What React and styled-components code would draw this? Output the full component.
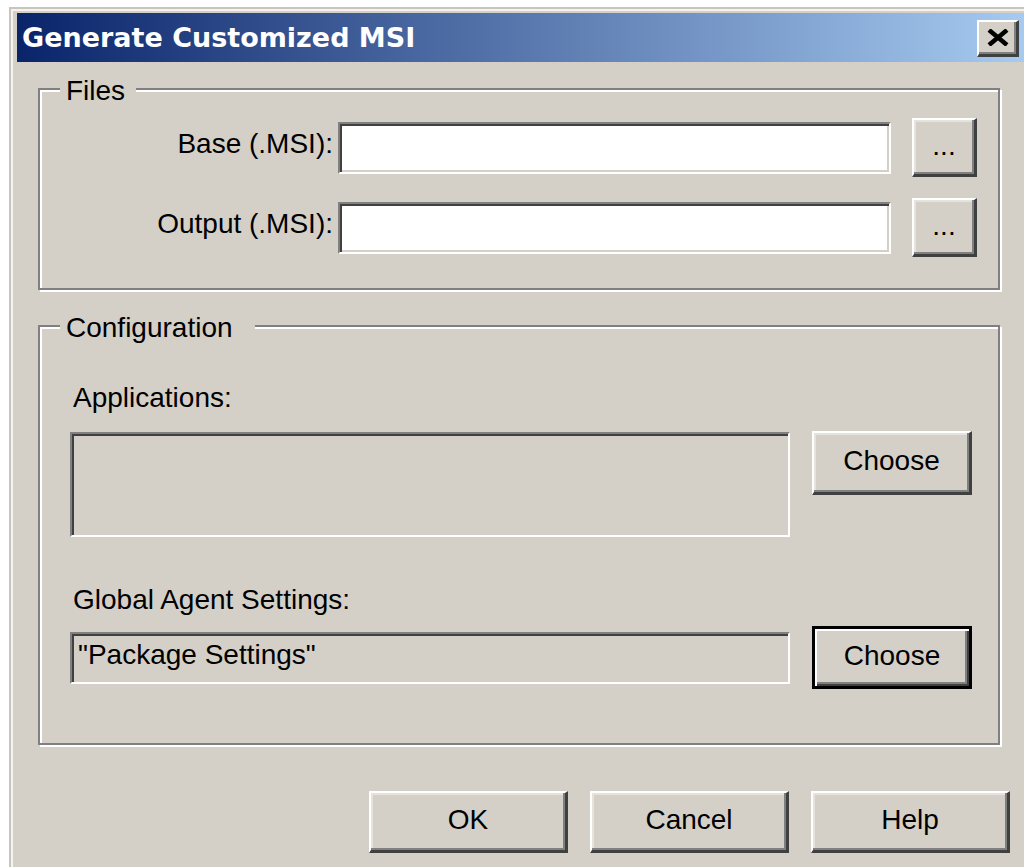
import React from 'react';
import styled, { createGlobalStyle, css } from 'styled-components';

const GlobalStyle = createGlobalStyle`
  html, body {
    margin: 0;
    background: #fff;
    overflow: hidden;
  }
  body {
    font-family: "Liberation Sans", Arial, sans-serif;
  }
`;

const face = '#d4d0c8';

// classic sunken edge used by edit boxes and list boxes
const sunken = css`
  box-sizing: border-box;
  border-style: solid;
  border-width: 2px;
  border-color: #808080 #fff #fff #808080;
  box-shadow: inset 2px 2px 0 #404040, inset -2px -2px 0 ${face};
`;

const Window = styled.div`
  box-sizing: border-box;
  width: 1021px;
  margin: 7px 0 0 9px;
  padding: 4px 6px 0;
  background: ${face};
  border: 2px solid #c9c5bd;
  border-right: none;
  border-bottom: none;
  box-shadow: inset 2px 2px 0 #f4f3f0;
`;

const TitleBar = styled.div`
  display: flex;
  align-items: center;
  justify-content: space-between;
  height: 49px;
  padding: 0 5px 0 5px;
  background: linear-gradient(to right, #0a246a, #a6caf0);
`;

const Caption = styled.span`
  font-family: "DejaVu Sans", Verdana, sans-serif;
  font-weight: bold;
  font-size: 27px;
  color: #fff;
  white-space: nowrap;
`;

const CloseButton = styled.button`
  box-sizing: border-box;
  display: flex;
  align-items: center;
  justify-content: center;
  width: 42px;
  height: 37px;
  margin: 2px 0 0;
  padding: 0 0 2px;
  background: ${face};
  border-style: solid;
  border-width: 2px 3px 3px 2px;
  border-color: #fff #404040 #404040 #fff;
  box-shadow: inset -2px -2px 0 #808080;
`;

const DialogBody = styled.div`
  padding: 26px 14px 0 21px;
  height: 820px;
`;

const Group = styled.div`
  position: relative;
  box-sizing: border-box;
  margin: ${(p) => p.$mt || 0}px 10px 0 0;
  padding: ${(p) => p.$pad};
  border: 2px solid #808080;
  box-shadow: inset 2px 2px 0 #fff, 2px 2px 0 #fff;
`;

const Legend = styled.span`
  position: absolute;
  top: -15px;
  left: 20px;
  padding: 0 ${(p) => p.$trail || 11}px 0 6px;
  background: ${face};
  font-size: 28px;
  line-height: 32px;
  color: #000;
`;

const FileRow = styled.div`
  display: flex;
  align-items: center;
  & + & {
    margin-top: 21px;
  }
`;

const FieldLabel = styled.label`
  flex: 1;
  margin-right: 5px;
  padding-bottom: 8px;
  text-align: right;
  font-size: 28px;
  line-height: 32px;
  color: #000;
  white-space: nowrap;
`;

const TextInput = styled.input`
  ${sunken};
  width: 553px;
  height: 52px;
  margin: 0;
  padding: 0 6px;
  background: #fff;
  font-family: inherit;
  font-size: 28px;
  outline: none;
`;

const Button = styled.button`
  box-sizing: border-box;
  flex: none;
  width: ${(p) => p.$w}px;
  height: ${(p) => p.$h}px;
  margin: 0 0 0 ${(p) => p.$ml || 0}px;
  padding: 0 0 3px;
  background: ${face};
  font-family: "Liberation Sans", Arial, sans-serif;
  font-size: 28px;
  color: #000;
  border-style: solid;
  border-width: 2px 3px 3px 2px;
  border-color: #fff #404040 #404040 #fff;
  box-shadow: inset -2px -2px 0 #808080, inset 2px 2px 0 #e6e3dd;

  ${(p) =>
    p.$default &&
    css`
      border: 3px solid #000;
      box-shadow: inset 2px 2px 0 #fff, inset -2px -2px 0 #404040,
        inset -4px -4px 0 #808080;
    `}
`;

const SectionLabel = styled.div`
  margin: ${(p) => p.$mt || 0}px 0 ${(p) => p.$mb}px 3px;
  font-size: 28px;
  line-height: 32px;
  color: #000;
  white-space: nowrap;
`;

const PickRow = styled.div`
  display: flex;
  align-items: ${(p) => p.$align};
`;

const ListBox = styled.div`
  ${sunken};
  flex: 1;
  height: 105px;
  margin-top: 1px;
  background: ${face};
`;

const ValueField = styled.div`
  ${sunken};
  flex: 1;
  display: flex;
  align-items: center;
  height: 52px;
  padding: 0 6px 5px 6px;
  background: ${face};
  font-size: 28px;
  line-height: 32px;
  color: #000;
  white-space: nowrap;
`;

const ButtonBar = styled.div`
  display: flex;
  justify-content: flex-end;
  gap: 22px;
  margin-top: 46px;
`;

function CloseGlyph() {
  return (
    <svg width="22" height="17" viewBox="0 0 22 17">
      <path d="M2 1 L20 16 M20 1 L2 16" stroke="#000" strokeWidth="4.5" fill="none" />
    </svg>
  );
}

export default function App() {
  return (
    <>
      <GlobalStyle />
      <Window>
        <TitleBar>
          <Caption>Generate Customized MSI</Caption>
          <CloseButton aria-label="Close">
            <CloseGlyph />
          </CloseButton>
        </TitleBar>

        <DialogBody>
          <Group $pad="28px 21px 31px 0">
            <Legend>Files</Legend>
            <FileRow>
              <FieldLabel>Base (.MSI):</FieldLabel>
              <TextInput />
              <Button $w={65} $h={59} $ml={21}>...</Button>
            </FileRow>
            <FileRow>
              <FieldLabel>Output (.MSI):</FieldLabel>
              <TextInput />
              <Button $w={65} $h={59} $ml={21}>...</Button>
            </FileRow>
          </Group>

          <Group $mt={35} $pad="55px 26px 54px 30px">
            <Legend $trail={22}>Configuration</Legend>
            <SectionLabel $mb={17}>Applications:</SectionLabel>
            <PickRow $align="flex-start">
              <ListBox />
              <Button $w={160} $h={64} $ml={22}>Choose</Button>
            </PickRow>
            <SectionLabel $mt={47} $mb={10}>Global Agent Settings:</SectionLabel>
            <PickRow $align="center">
              <ValueField>"Package Settings"</ValueField>
              <Button $w={160} $h={63} $ml={22} $default>Choose</Button>
            </PickRow>
          </Group>

          <ButtonBar>
            <Button $w={199} $h={62}>OK</Button>
            <Button $w={199} $h={62}>Cancel</Button>
            <Button $w={199} $h={62}>Help</Button>
          </ButtonBar>
        </DialogBody>
      </Window>
    </>
  );
}
